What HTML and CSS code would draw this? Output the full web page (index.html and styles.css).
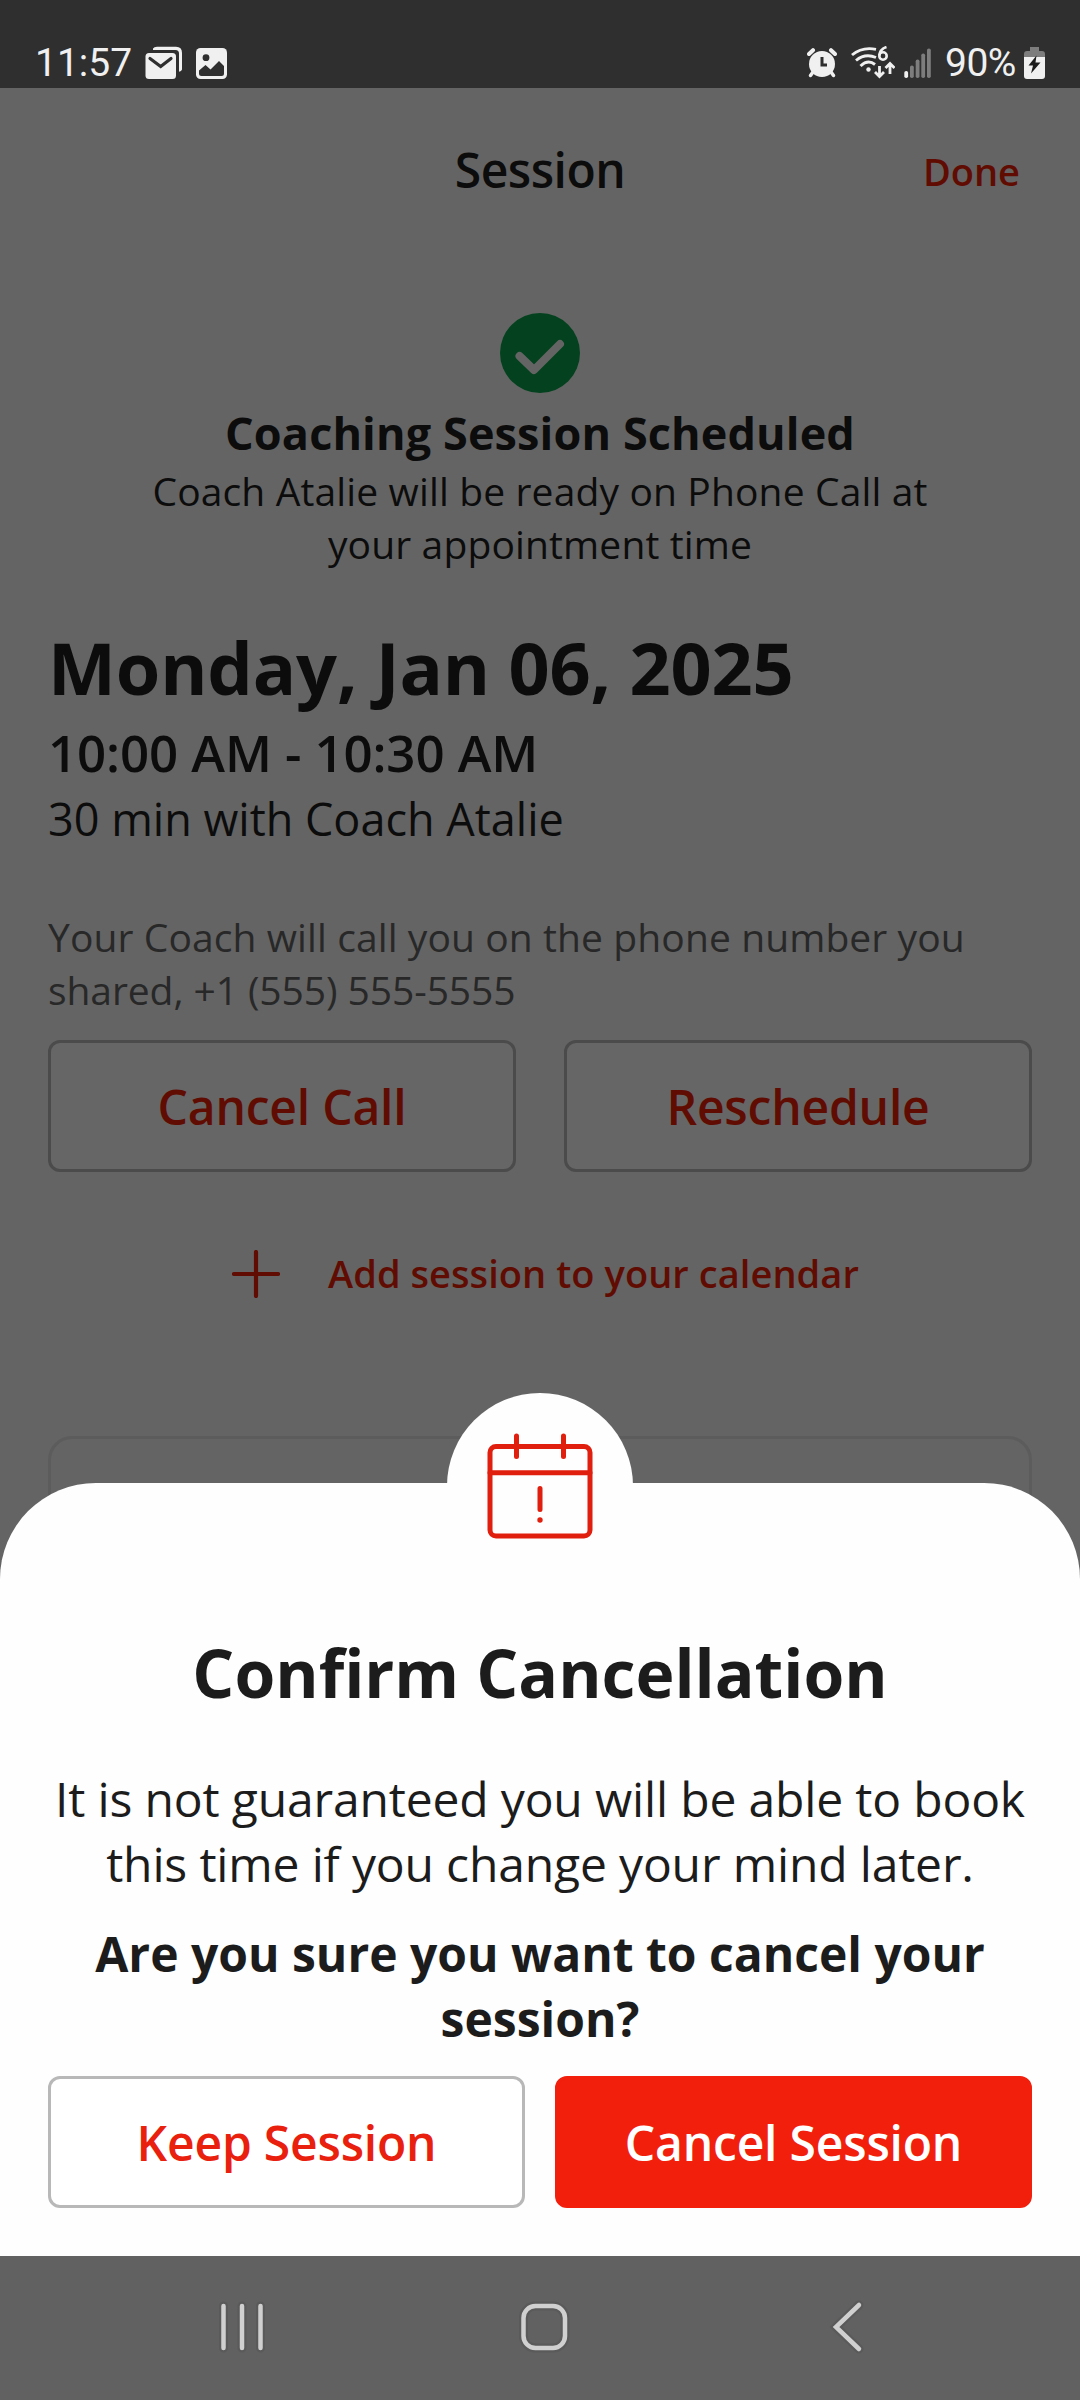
FILE: index.html
```html
<!DOCTYPE html>
<html lang="en">
<head>
<meta charset="utf-8">
<title>Session</title>
<link rel="stylesheet" href="styles.css">
</head>
<body>
<div class="phone">
  <header class="status">
    <div class="status-left">
      <span class="clock">11:57</span>
      <svg class="ic-mail" width="38" height="34" viewBox="0 0 38 34">
        <path d="M8 2.5Q9 .8 12 .8H31Q37 .8 37 7V23.500Q36.500 25.500 34 25.700V7.500Q34 4 30.500 4H8Z" fill="#f0f0f0"/>
        <rect x=".5" y="7" width="30.500" height="26" rx="3.500" fill="#f0f0f0"/>
        <path d="M5 12.500L15.700 20.500L26 12.500" fill="none" stroke="#2f2f2f" stroke-width="3.200" stroke-linecap="round"/>
      </svg>
      <svg class="ic-photo" width="31" height="31" viewBox="0 0 31 31">
        <rect width="31" height="31" rx="4.500" fill="#f0f0f0"/>
        <circle cx="10" cy="9.700" r="3.400" fill="#2f2f2f"/>
        <path d="M3 22.500L9.500 17L14.500 21.500L23 13L28 18V25.500Q28 28 25.500 28H5.500Q3 28 3 25.500Z" fill="#2f2f2f"/>
      </svg>
    </div>
    <div class="status-right">
      <svg class="ic-alarm" width="30" height="30" viewBox="0 0 30 30">
        <g stroke="#f0f0f0" stroke-linecap="round" fill="none">
          <path d="M2 6L6 2.200M24 2.200L28 6" stroke-width="4"/>
          <path d="M6 24L3.500 27.500M24 24L26.500 27.500" stroke-width="3.500"/>
        </g>
        <circle cx="15" cy="16" r="13" fill="#f0f0f0"/>
        <path d="M15 9V17H20" fill="none" stroke="#2f2f2f" stroke-width="3"/>
      </svg>
      <svg class="ic-wifi" width="44" height="34" viewBox="0 0 44 34">
        <g stroke="#f0f0f0" fill="none" stroke-width="2.900">
          <path d="M1 9Q11 .5 25 3.300"/>
          <path d="M5 14.500Q14 7 25 11.500"/>
          <path d="M9.500 20Q17 13 24 18.500"/>
          <path d="M35.500 1Q29 3 28.300 9.500" stroke-width="2.600"/>
          <circle cx="32" cy="10" r="3.700" stroke-width="2.600"/>
          <path d="M28.500 20V30M24 26L28.500 30.500L33 26" stroke-width="2.800"/>
          <path d="M39 28V18M34.500 22L39 17.500L43.500 22" stroke-width="2.800"/>
        </g>
        <circle cx="17.500" cy="23.500" r="2.200" fill="#f0f0f0"/>
      </svg>
      <svg class="ic-signal" width="28" height="31" viewBox="0 0 28 31">
        <rect x=".3" y="23" width="3.800" height="7" rx="1.800" fill="#f0f0f0"/>
        <g fill="#7d7d7d">
          <rect x="6" y="17.500" width="3.800" height="12.500" rx="1.800"/>
          <rect x="11.700" y="11.500" width="3.800" height="18.500" rx="1.800"/>
          <rect x="17.300" y="5.500" width="3.800" height="24.500" rx="1.800"/>
          <rect x="23" y=".5" width="3.800" height="29.500" rx="1.800"/>
        </g>
      </svg>
      <span class="battery-text">90%</span>
      <svg class="ic-battery" width="21" height="32" viewBox="0 0 21 32">
        <path d="M6 0H15V4H18Q21 4 21 7V10H0V7Q0 4 3 4H6Z" fill="#7d7d7d"/>
        <path d="M0 10H21V29Q21 32 18 32H3Q0 32 0 29Z" fill="#f0f0f0"/>
        <path d="M12.500 8.500L4.500 18.500H9L7 26.500L16.500 15.500H11.500Z" fill="#1c1c1c"/>
      </svg>
    </div>
  </header>

  <div class="screen">
    <nav class="topbar">
      <h1 class="title">Session</h1>
      <span class="done">Done</span>
    </nav>
    <main class="content">
      <section class="confirmation">
        <svg width="80" height="80" viewBox="0 0 80 80">
          <circle cx="40" cy="40" r="40" fill="#04421f"/>
          <path d="M19.500 43L34 57L60 31" fill="none" stroke="#646464" stroke-width="8" stroke-linecap="round" stroke-linejoin="round"/>
        </svg>
        <h2 class="scheduled">Coaching Session Scheduled</h2>
        <p class="ready">Coach Atalie will be ready on Phone Call at<br>your appointment time</p>
      </section>
      <section class="details">
        <p class="date">Monday, Jan 06, 2025</p>
        <p class="time">10:00 AM - 10:30 AM</p>
        <p class="length">30 min with Coach Atalie</p>
        <p class="note">Your Coach will call you on the phone number you<br><span class="number">shared, +1 (555) 555-5555</span></p>
      </section>
      <div class="actions">
        <button class="btn dimmed">Cancel Call</button>
        <button class="btn dimmed">Reschedule</button>
      </div>
      <div class="add">
        <svg width="48" height="48" viewBox="0 0 48 48">
          <path d="M24 2V46M2 24H46" stroke="#600c02" stroke-width="4.200" stroke-linecap="round"/>
        </svg>
        <span class="add-label">Add session to your calendar</span>
      </div>
      <div class="card"></div>
    </main>
  </div>

  <section class="sheet">
    <div class="badge">
      <svg width="106" height="106" viewBox="0 0 106 106" fill="none" stroke="#e11f0e" stroke-width="5" stroke-linecap="round">
        <rect x="3" y="13.500" width="100" height="89.500" rx="6"/>
        <path d="M3 39.700H103M29.500 3V23.500M76.500 3V23.500M53 55.500V76.500"/>
        <circle cx="53" cy="87" r="2.700" fill="#e11f0e" stroke="none"/>
      </svg>
    </div>
    <h2 class="sheet-title">Confirm Cancellation</h2>
    <p class="sheet-text">It is not guaranteed you will be able to book<br>this time if you change your mind later.</p>
    <p class="sheet-question">Are you sure you want to cancel your<br>session?</p>
    <div class="sheet-actions">
      <button class="btn">Keep Session</button>
      <button class="btn primary">Cancel Session</button>
    </div>
  </section>

  <footer class="navbar">
    <svg width="54" height="60" viewBox="0 0 54 60"><g class="nav-halo"><path d="M8.500 9V51M27 9V51M45.500 9V51"/></g><g class="nav-line"><path d="M8.500 9V51M27 9V51M45.500 9V51"/></g></svg>
    <svg class="nav-home" width="60" height="60" viewBox="0 0 60 60"><rect class="nav-halo" x="9.500" y="9" width="41.500" height="42" rx="12"/><rect class="nav-line" x="9.500" y="9" width="41.500" height="42" rx="12"/></svg>
    <svg class="nav-back" width="40" height="60" viewBox="0 0 40 60"><path class="nav-halo" d="M32 8L9 30L32 52"/><path class="nav-line" d="M32 8L9 30L32 52"/></svg>
  </footer>
</div>
</body>
</html>
```
FILE: styles.css
```css
* { box-sizing: border-box; margin: 0; padding: 0; }
body { width: 1080px; height: 2400px; overflow: hidden; background: #646464; font-family: "Open Sans", sans-serif; color: #0c0c0c; }
svg { display: block; flex: none; }
h1, h2, p, span, button { white-space: nowrap; }

.phone { position: relative; display: flex; flex-direction: column; width: 1080px; height: 2400px; }

.status { display: flex; justify-content: space-between; height: 88px; padding: 38px 35px 0; background: #2f2f2f; color: #f0f0f0; font-family: Roboto, sans-serif; font-size: 39px; line-height: 50px; }
.status-left, .status-right { display: flex; align-items: center; height: 50px; }
.clock { width: 110px; }
.ic-photo { margin-left: 13px; }
.ic-wifi { margin-left: 14px; }
.ic-signal { margin-left: 9px; }
.battery-text { margin-left: 13px; width: 71px; letter-spacing: -0.5px; }
.ic-battery { margin-left: 8px; }

.screen { flex: 1; display: flex; flex-direction: column; overflow: hidden; }
.topbar { display: grid; grid-template-columns: 1fr auto 1fr; align-items: center; height: 164px; padding: 0 60px; }
.title { grid-column: 2; margin-bottom: 2px; font-size: 48px; font-weight: 600; letter-spacing: -0.5px; line-height: 65px; }
.done { justify-self: end; margin-top: 2px; color: #600c02; font-size: 38px; font-weight: 600; line-height: 53px; }

.content { display: flex; flex-direction: column; padding: 61px 48px 0; }
.confirmation { display: flex; flex-direction: column; align-items: center; text-align: center; }
.scheduled { margin-top: 9px; font-size: 45px; font-weight: 700; letter-spacing: 0.12px; line-height: 61px; }
.ready { margin-top: 1px; font-size: 39px; letter-spacing: 0.14px; line-height: 53px; }
.details { margin-top: 48px; }
.date { font-size: 72px; font-weight: 700; letter-spacing: -0.15px; line-height: 98px; }
.time { margin-top: 1px; font-size: 51px; font-weight: 600; letter-spacing: -0.1px; line-height: 70px; }
.length { margin-top: 1px; font-size: 45px; line-height: 61px; }
.note { margin-top: 61px; color: #282828; font-size: 39px; letter-spacing: 0.1px; line-height: 53px; }
.number { letter-spacing: -0.08px; }

.actions { display: grid; grid-template-columns: 1fr 1fr; gap: 48px; margin-top: 24px; }
.btn { height: 132px; border: 3px solid #b8b8b8; border-radius: 12px; background: #fff; color: #ea200f; font-family: inherit; font-size: 48px; font-weight: 600; letter-spacing: -0.2px; line-height: 65px; }
.dimmed { border-color: #4b4b4b; background: #666; color: #600c02; }
.primary { border-color: #f21f0c; background: #f21f0c; color: #fff; }

.add { display: flex; align-items: center; gap: 48px; height: 53px; margin-top: 75px; padding-left: 184px; color: #600c02; }
.add-label { font-size: 38px; font-weight: 600; letter-spacing: 0.06px; line-height: 53px; }
.card { height: 200px; margin-top: 136px; border: 3px solid #5c5c5c; border-radius: 24px; }

.sheet { position: absolute; top: 1483px; left: 0; display: flex; flex-direction: column; align-items: center; width: 1080px; height: 773px; padding: 144px 48px 48px; border-radius: 96px 96px 0 0; background: #fefefe; color: #1c1c1c; text-align: center; }
.badge { position: absolute; top: -90px; left: 447px; display: flex; justify-content: center; width: 186px; height: 186px; padding-top: 40px; border-radius: 50%; background: #fefefe; }
.sheet-title { font-size: 66px; font-weight: 700; line-height: 90px; }
.sheet-text { margin-top: 49px; font-size: 48px; letter-spacing: -0.16px; line-height: 65px; }
.sheet-question { margin-top: 25px; font-size: 48px; font-weight: 700; line-height: 65px; }
.sheet-actions { display: grid; grid-template-columns: 1fr 1fr; gap: 30px; width: 100%; margin-top: auto; }

.navbar { display: flex; height: 144px; padding: 41px 0 0 215px; background: #616161; }
.nav-home { margin-left: 245px; }
.nav-back { margin-left: 253px; }
.nav-line, .nav-halo { fill: none; stroke-linecap: round; }
.nav-line { stroke: #d0d0d0; stroke-width: 4.5px; }
.nav-halo { stroke: #5a5a5a; stroke-width: 9px; }
```
